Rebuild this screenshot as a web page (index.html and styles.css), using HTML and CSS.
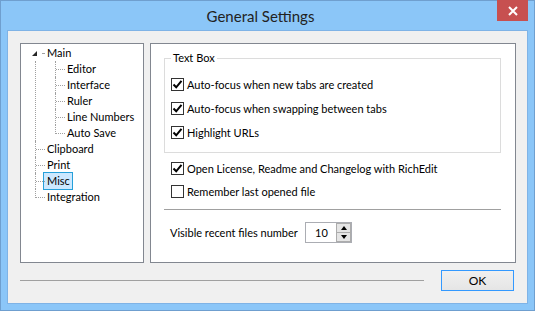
FILE: index.html
```html
<!DOCTYPE html>
<html lang="en">
<head>
    <meta charset="UTF-8">
    <title>General Settings</title>
    <link rel="stylesheet" href="styles.css">
</head>
<body>
<div class="window">
    <div class="titlebar">
        <span class="title">General Settings</span>
        <button class="close" title="Close">
            <svg width="10" height="10" viewBox="0 0 10 10">
                <path d="M1 1 L9 9 M9 1 L1 9" stroke="#fff" stroke-width="2"/>
            </svg>
        </button>
    </div>
    <div class="client">
        <div class="panes">
            <div class="tree-box">
                <ul class="tree">
                    <li class="open">
                        <div class="row"><span class="exp"></span><span class="label">Main</span></div>
                        <ul>
                            <li><div class="row"><span class="label">Editor</span></div></li>
                            <li><div class="row"><span class="label">Interface</span></div></li>
                            <li><div class="row"><span class="label">Ruler</span></div></li>
                            <li><div class="row"><span class="label">Line Numbers</span></div></li>
                            <li><div class="row"><span class="label">Auto Save</span></div></li>
                        </ul>
                    </li>
                    <li><div class="row"><span class="label">Clipboard</span></div></li>
                    <li><div class="row"><span class="label">Print</span></div></li>
                    <li><div class="row"><span class="label sel">Misc</span></div></li>
                    <li><div class="row"><span class="label">Integration</span></div></li>
                </ul>
            </div>
            <div class="page">
                <fieldset class="group">
                    <legend>Text Box</legend>
                    <label class="check"><span class="box"><svg width="11" height="11" viewBox="0 0 11 11"><path d="M1.5 5.5 L4.2 8.3 L9.5 1.8" fill="none" stroke="#000" stroke-width="2"/></svg></span>Auto-focus when new tabs are created</label>
                    <label class="check"><span class="box"><svg width="11" height="11" viewBox="0 0 11 11"><path d="M1.5 5.5 L4.2 8.3 L9.5 1.8" fill="none" stroke="#000" stroke-width="2"/></svg></span>Auto-focus when swapping between tabs</label>
                    <label class="check"><span class="box"><svg width="11" height="11" viewBox="0 0 11 11"><path d="M1.5 5.5 L4.2 8.3 L9.5 1.8" fill="none" stroke="#000" stroke-width="2"/></svg></span>Highlight URLs</label>
                </fieldset>
                <div class="options">
                    <label class="check"><span class="box"><svg width="11" height="11" viewBox="0 0 11 11"><path d="M1.5 5.5 L4.2 8.3 L9.5 1.8" fill="none" stroke="#000" stroke-width="2"/></svg></span>Open License, Readme and Changelog with RichEdit</label>
                    <label class="check"><span class="box"></span>Remember last opened file</label>
                </div>
                <hr class="sep">
                <div class="field">
                    <span class="field-label">Visible recent files number</span>
                    <div class="spin">
                        <span class="value">10</span>
                        <div class="arrows">
                            <span class="arrow up"></span>
                            <span class="arrow down"></span>
                        </div>
                    </div>
                </div>
            </div>
        </div>
        <div class="footer">
            <hr class="rule">
            <button class="ok">OK</button>
        </div>
    </div>
</div>
</body>
</html>
```

FILE: styles.css
```css
html, body {
    margin: 0;
}

body {
    font-family: Lato, "Open Sans", sans-serif;
    font-size: 11px;
    color: #000;
}

.window {
    position: relative;
    display: flex;
    flex-direction: column;
    width: 535px;
    height: 311px;
    box-sizing: border-box;
    border: 1px solid #6f9fcf;
    background-color: #8bc6f8;
}

.titlebar {
    display: flex;
    align-items: center;
    justify-content: center;
    height: 29px;
    padding-right: 14px;
    font-size: 15px;
    color: #222;
}

.close {
    position: absolute;
    top: -1px;
    right: 6px;
    width: 31px;
    height: 21px;
    padding: 0;
    border: none;
    background-color: #c75050;
    display: flex;
    align-items: center;
    justify-content: center;
}

.client {
    flex: 1;
    display: flex;
    flex-direction: column;
    margin: 0 6px 6px;
    padding: 12px 11px 0 12px;
    border: 1px solid #7fb3e6;
    background-color: #f0f0f0;
}

.panes {
    display: flex;
    gap: 6px;
    height: 220px;
}

.tree-box {
    width: 124px;
    box-sizing: border-box;
    border: 1px solid #828790;
    background-color: #fff;
}

/* tree */
.tree, .tree ul {
    list-style: none;
    margin: 0;
}

.tree {
    padding: 1px 0 0 14px;
}

.tree ul {
    padding-left: 8px;
}

.tree li {
    position: relative;
    padding-left: 12px;
}

.tree li::before {
    content: "";
    position: absolute;
    left: 0;
    top: 0;
    bottom: 0;
    border-left: 1px dotted #a0a0a0;
}

.tree > li:first-child::before {
    top: 16px;
}

.tree li:last-child::before {
    bottom: auto;
    height: 9px;
}

.tree li::after {
    content: "";
    position: absolute;
    left: 1px;
    top: 8px;
    width: 9px;
    border-top: 1px dotted #a0a0a0;
}

.tree li.open::after {
    left: 7px;
    width: 2px;
}

.row {
    height: 16px;
    line-height: 16px;
    white-space: nowrap;
}

.label {
    display: inline-block;
    vertical-align: top;
}

.label.sel {
    margin: -1px 0 0 -4px;
    padding: 0 2px 0 3px;
    border: 1px solid #26a0da;
    background-color: #cce8ff;
}

.exp {
    position: absolute;
    left: -3px;
    top: 6px;
    width: 0;
    height: 0;
    border-left: 5px solid transparent;
    border-bottom: 5px solid #262626;
}

/* right page */
.page {
    flex: 1;
    padding: 6px 14px 0 13px;
    border: 1px solid #828790;
    background-color: #fff;
}

.group {
    margin: 0;
    padding: 6px 0 8px 6px;
    min-width: 0;
    border: 1px solid #dcdcdc;
}

.group legend {
    padding: 0 2px;
    line-height: 16px;
}

.check {
    display: flex;
    align-items: center;
    height: 24px;
    white-space: nowrap;
}

.box {
    display: inline-flex;
    align-items: center;
    justify-content: center;
    width: 13px;
    height: 13px;
    box-sizing: border-box;
    margin-right: 3px;
    border: 1px solid #333;
    background-color: #fff;
}

.options {
    margin-top: 4px;
    padding-left: 7px;
}

.options .check {
    height: 23px;
}

.sep, .rule {
    height: 0;
    margin: 0;
    border: none;
    border-top: 1px solid #a0a0a0;
}

.sep {
    margin-top: 6px;
}

.field {
    display: flex;
    align-items: center;
    margin-top: 12px;
    padding-left: 6px;
}

.field-label {
    width: 135px;
    white-space: nowrap;
}

.spin {
    display: flex;
    width: 47px;
    height: 21px;
    box-sizing: border-box;
    border: 1px solid #abadb3;
}

.spin .value {
    flex: 1;
    padding-left: 9px;
    line-height: 19px;
}

.arrows {
    display: flex;
    flex-direction: column;
    width: 15px;
}

.arrow {
    flex: 1;
    display: flex;
    align-items: center;
    justify-content: center;
    box-sizing: border-box;
    border: 1px solid #acacac;
    background-color: #e5e5e5;
}

.arrow.down {
    border-top: none;
}

.arrow::after {
    content: "";
    border-left: 3px solid transparent;
    border-right: 3px solid transparent;
}

.arrow.up::after {
    border-bottom: 4px solid #000;
}

.arrow.down::after {
    border-top: 4px solid #000;
}

.footer {
    display: flex;
    align-items: center;
    gap: 17px;
    margin-top: 7px;
}

.rule {
    width: 404px;
}

.ok {
    width: 73px;
    height: 21px;
    padding: 0;
    border: 1px solid #3399ff;
    background: linear-gradient(#f0f0f0, #e5e5e5);
    font-family: inherit;
    font-size: 12px;
    color: #000;
}
```
